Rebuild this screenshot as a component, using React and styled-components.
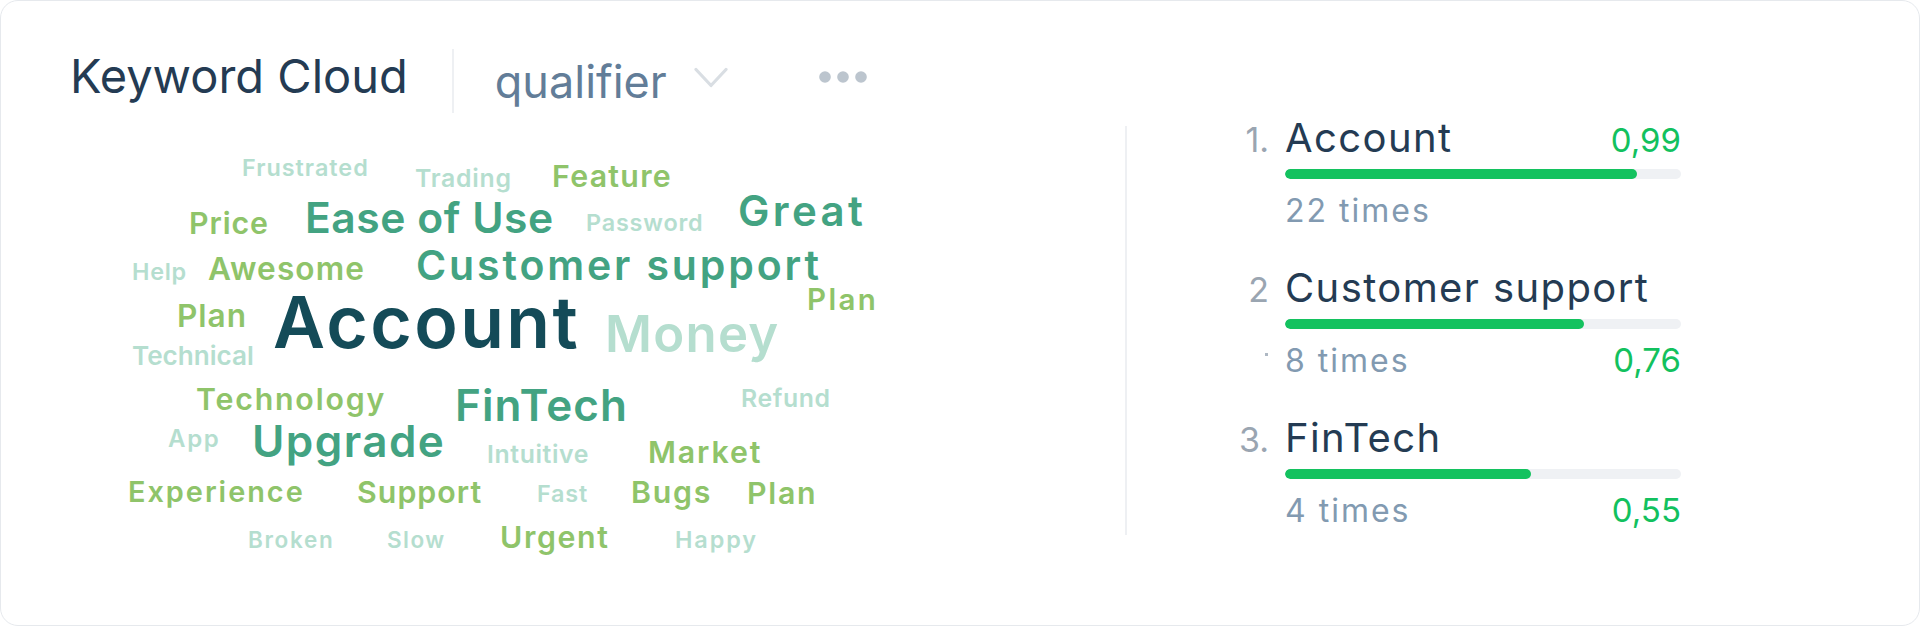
import React from "react";
import styled, { createGlobalStyle } from "styled-components";

const GlobalStyle = createGlobalStyle`
  html, body { margin: 0; padding: 0; background: #ffffff; }
  body { font-family: "Inter", "Liberation Sans", sans-serif; }
  * { box-sizing: border-box; }
`;

const CLOUD_TOP = 113;

const Card = styled.div`
  width: 1920px;
  height: 626px;
  border: 1px solid #e6e9ed;
  border-radius: 18px;
  background: #fff;
  display: flex;
  overflow: hidden;
`;

const LeftPane = styled.section`
  flex: 0 0 1124px;
  display: flex;
  flex-direction: column;
`;

const Header = styled.header`
  margin-top: 48px;
  padding-left: 69px;
  height: 64px;
  display: flex;
  align-items: center;
`;

const Title = styled.h2`
  margin: 0 0 11px 0;
  font-size: 47px;
  font-weight: 400;
  line-height: 1;
  color: #243b53;
  white-space: nowrap;
`;

const HeaderDivider = styled.div`
  width: 2px;
  height: 64px;
  background: #eef0f3;
  margin-left: 44px;
`;

const Qualifier = styled.button`
  margin-left: 41px;
  padding: 0;
  border: 0;
  background: none;
  font-family: inherit;
  font-size: 45px;
  font-weight: 400;
  line-height: 1;
  color: #627d98;
`;

const Chevron = styled.svg`
  margin-left: 27px;
  margin-bottom: 7px;
`;

const MoreDots = styled.svg`
  margin-left: 91px;
  margin-bottom: 9px;
`;

const Cloud = styled.div`
  position: relative;
  flex: 1;
`;

const tones = {
  light: "#b5decf",
  green: "#8fc46a",
  teal: "#43a382",
  dark: "#144b58",
};

const Word = styled.span`
  position: absolute;
  left: ${(p) => p.$x - 1}px;
  top: ${(p) => p.$b - CLOUD_TOP - 0.864 * p.$s}px;
  font-size: ${(p) => p.$s}px;
  letter-spacing: ${(p) => p.$ls}em;
  color: ${(p) => tones[p.$tone]};
  font-weight: 600;
  line-height: 1;
  white-space: nowrap;
`;

const VDivider = styled.div`
  flex: 0 0 2px;
  align-self: flex-start;
  margin-top: 125px;
  height: 409px;
  background: #eef0f3;
`;

const RightPane = styled.section`
  padding: 113px 0 0 92px;
  display: flex;
  flex-direction: column;
`;

const Item = styled.div`
  display: flex;
  flex-direction: column;
  margin-bottom: 35.5px;
`;

const Row = styled.div`
  display: grid;
  grid-template-columns: 50px 396px;
  column-gap: 16px;
  align-items: baseline;
`;

const HeadRow = styled(Row)`
  height: 48px;
`;

const TimesRow = styled(Row)`
  height: 36px;
  margin-top: 14px;
`;

const Rank = styled.span`
  text-align: right;
  font-size: 34px;
  line-height: 1;
  color: #9aa5b1;
`;

const BulletCell = styled.span`
  text-align: right;
  font-size: 32px;
  line-height: 1;
  padding-right: 1px;
`;

const Dot = styled.span`
  display: inline-block;
  width: 3px;
  height: 3px;
  background: #aeb8c3;
  vertical-align: 15.5px;
`;

const Line = styled.div`
  display: flex;
  justify-content: space-between;
  align-items: baseline;
`;

const Name = styled.span`
  font-size: 40px;
  line-height: 48px;
  letter-spacing: 1.4px;
  color: #243b53;
`;

const Value = styled.span`
  font-size: 33px;
  line-height: 1;
  color: #12c15e;
`;

const Track = styled.div`
  width: 396px;
  height: 10px;
  margin: 6.5px 0 0 66px;
  border-radius: 5px;
  background: #eff1f4;
  overflow: hidden;
`;

const Fill = styled.div`
  height: 100%;
  border-radius: 5px;
  background: #14c25f;
`;

const Times = styled.span`
  font-size: 32px;
  line-height: 36px;
  letter-spacing: 2px;
  color: #829ab1;
`;

const words = [
  { t: "Frustrated", x: 242, b: 176, s: 23.4, ls: 0.042, tone: "light" },
  { t: "Trading", x: 415, b: 187, s: 24.8, ls: 0.03, tone: "light" },
  { t: "Feature", x: 552, b: 187, s: 30.3, ls: 0.043, tone: "green" },
  { t: "Price", x: 189, b: 234, s: 30.3, ls: 0.03, tone: "green" },
  { t: "Ease of Use", x: 305, b: 234, s: 42.6, ls: 0.013, tone: "teal" },
  { t: "Password", x: 586, b: 231, s: 23.4, ls: 0.035, tone: "light" },
  { t: "Great", x: 738, b: 226, s: 42, ls: 0.08, tone: "teal" },
  { t: "Help", x: 132, b: 280, s: 23.4, ls: 0.03, tone: "light" },
  { t: "Awesome", x: 208, b: 280, s: 31.6, ls: 0.035, tone: "green" },
  { t: "Customer support", x: 416, b: 280, s: 41, ls: 0.07, tone: "teal" },
  { t: "Plan", x: 807, b: 310, s: 29.5, ls: 0.08, tone: "green" },
  { t: "Plan", x: 177, b: 327, s: 31.6, ls: 0.03, tone: "green" },
  { t: "Account", x: 273, b: 349, s: 71.5, ls: 0.033, tone: "dark" },
  { t: "Money", x: 605, b: 353, s: 50.9, ls: 0.025, tone: "light" },
  { t: "Technical", x: 132, b: 366, s: 26.1, ls: 0, tone: "light" },
  { t: "Technology", x: 196, b: 410, s: 30.3, ls: 0.06, tone: "green" },
  { t: "FinTech", x: 455, b: 421, s: 44, ls: 0.025, tone: "teal" },
  { t: "Refund", x: 741, b: 407, s: 24.8, ls: 0.025, tone: "light" },
  { t: "App", x: 168, b: 448, s: 24, ls: 0.07, tone: "light" },
  { t: "Upgrade", x: 252, b: 457, s: 44, ls: 0.033, tone: "teal" },
  { t: "Intuitive", x: 487, b: 463, s: 24.8, ls: 0.025, tone: "light" },
  { t: "Market", x: 648, b: 463, s: 30.3, ls: 0.062, tone: "green" },
  { t: "Experience", x: 128, b: 503, s: 28.9, ls: 0.068, tone: "green" },
  { t: "Support", x: 357, b: 503, s: 30.3, ls: 0.035, tone: "green" },
  { t: "Fast", x: 537, b: 502, s: 23.4, ls: 0.035, tone: "light" },
  { t: "Bugs", x: 631, b: 503, s: 30.3, ls: 0.057, tone: "green" },
  { t: "Plan", x: 747, b: 504, s: 30.3, ls: 0.057, tone: "green" },
  { t: "Broken", x: 248, b: 548, s: 22.5, ls: 0.074, tone: "light" },
  { t: "Slow", x: 387, b: 548, s: 22.5, ls: 0.066, tone: "light" },
  { t: "Urgent", x: 500, b: 548, s: 30.3, ls: 0.054, tone: "green" },
  { t: "Happy", x: 675, b: 548, s: 23.4, ls: 0.082, tone: "light" },
];

const ranking = [
  { rank: "1.", name: "Account", times: "22 times", value: "0,99", fill: 0.89, valueOnTop: true },
  { rank: "2", name: "Customer support", times: "8 times", value: "0,76", fill: 0.755, bullet: true },
  { rank: "3.", name: "FinTech", times: "4 times", value: "0,55", fill: 0.62 },
];

export default function App() {
  return (
    <>
      <GlobalStyle />
      <Card>
        <LeftPane>
          <Header>
            <Title>Keyword Cloud</Title>
            <HeaderDivider />
            <Qualifier>qualifier</Qualifier>
            <Chevron width="34" height="21" viewBox="0 0 34 21" fill="none">
              <polyline
                points="2,2.5 17,18.5 32,2.5"
                stroke="#d9dee3"
                strokeWidth="3.2"
                strokeLinecap="round"
                strokeLinejoin="round"
              />
            </Chevron>
            <MoreDots width="48" height="12" viewBox="0 0 48 12">
              <circle cx="6" cy="6" r="5.8" fill="#bcc5ce" />
              <circle cx="24" cy="6" r="5.8" fill="#bcc5ce" />
              <circle cx="42" cy="6" r="5.8" fill="#bcc5ce" />
            </MoreDots>
          </Header>
          <Cloud>
            {words.map((w, i) => (
              <Word key={i} $x={w.x} $b={w.b} $s={w.s} $ls={w.ls} $tone={w.tone}>
                {w.t}
              </Word>
            ))}
          </Cloud>
        </LeftPane>
        <VDivider />
        <RightPane>
          {ranking.map((r) => (
            <Item key={r.rank}>
              <HeadRow>
                <Rank>{r.rank}</Rank>
                <Line>
                  <Name>{r.name}</Name>
                  {r.valueOnTop && <Value>{r.value}</Value>}
                </Line>
              </HeadRow>
              <Track>
                <Fill style={{ width: `${r.fill * 100}%` }} />
              </Track>
              <TimesRow>
                <BulletCell>{r.bullet && <Dot />}</BulletCell>
                <Line>
                  <Times>{r.times}</Times>
                  {!r.valueOnTop && <Value>{r.value}</Value>}
                </Line>
              </TimesRow>
            </Item>
          ))}
        </RightPane>
      </Card>
    </>
  );
}
